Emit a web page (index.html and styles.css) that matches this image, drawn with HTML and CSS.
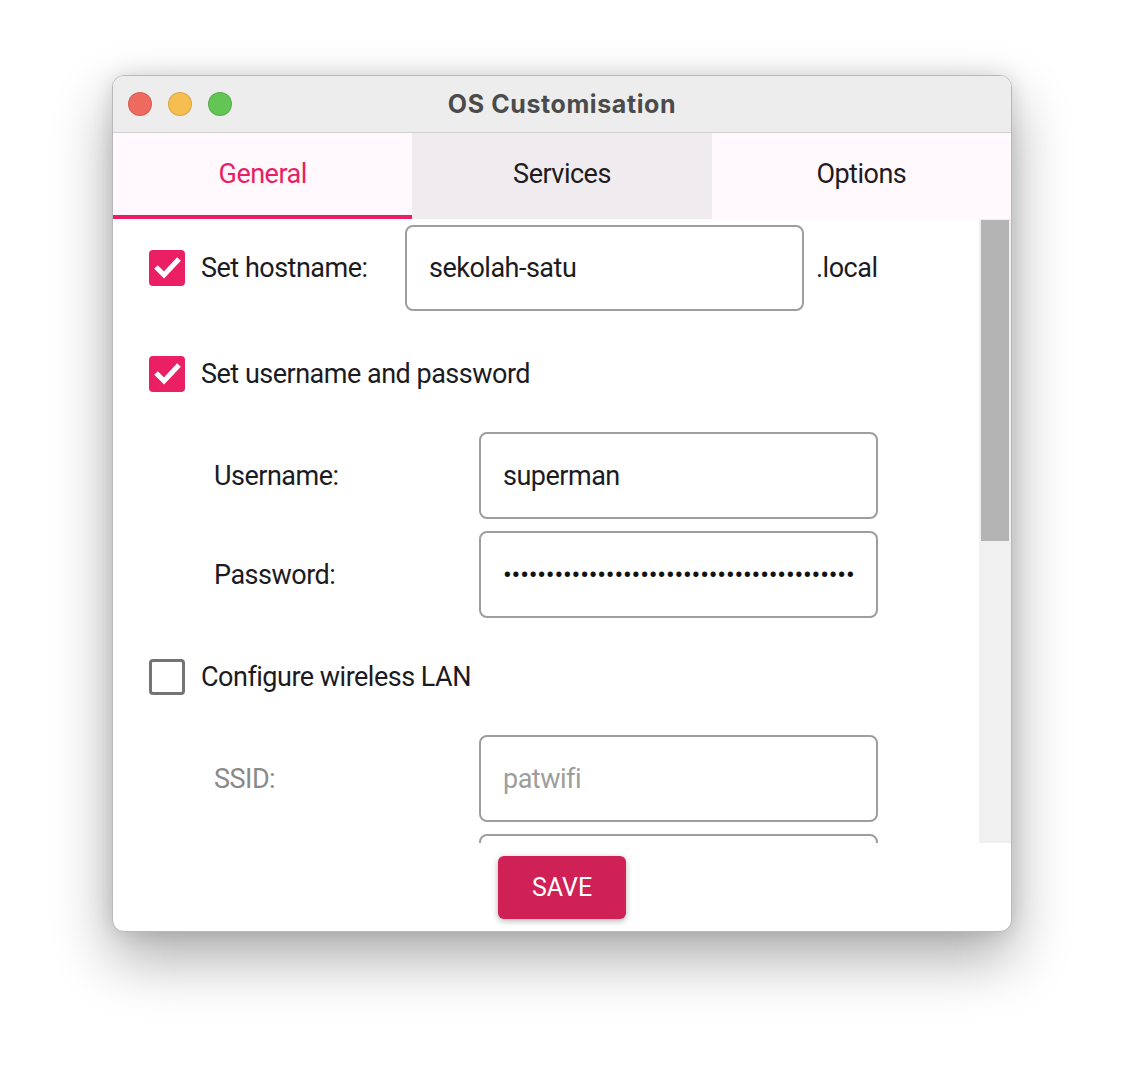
FILE: index.html
```html
<!DOCTYPE html>
<html lang="en">
  <head>
    <meta charset="UTF-8" />
    <meta name="viewport" content="width=device-width, initial-scale=1.0" />
    <title>OS Customisation</title>
    <link rel="stylesheet" href="styles.css">
  </head>
  <body>
    <div class="window">
      <div class="titlebar">
        <div class="lights">
          <span class="light red"></span>
          <span class="light yellow"></span>
          <span class="light green"></span>
        </div>
        <div class="title">OS Customisation</div>
      </div>
      <div class="tabs">
        <div class="tab active">General</div>
        <div class="tab hover">Services</div>
        <div class="tab">Options</div>
      </div>
      <div class="body">
        <div class="scroll">
          <div class="row host-row">
            <span class="check on">
              <svg viewBox="0 0 36 36" width="36" height="36"><path d="M7 17 L15 25 L30 9" fill="none" stroke="#fff" stroke-width="5"/></svg>
            </span>
            <span class="check-label host-label">Set hostname:</span>
            <input class="field" type="text" value="sekolah-satu" />
            <span class="suffix">.local</span>
          </div>

          <div class="row check-row">
            <span class="check on">
              <svg viewBox="0 0 36 36" width="36" height="36"><path d="M7 17 L15 25 L30 9" fill="none" stroke="#fff" stroke-width="5"/></svg>
            </span>
            <span class="check-label">Set username and password</span>
          </div>
          <div class="sub">
            <div class="row sub-row">
              <label class="sub-label">Username:</label>
              <input class="field" type="text" value="superman" />
            </div>
            <div class="row sub-row">
              <label class="sub-label">Password:</label>
              <input class="field pass" type="password" value="aaaaaaaaaaaaaaaaaaaaaaaaaaaaaaaaaaaaaaaaa" />
            </div>
          </div>

          <div class="row check-row">
            <span class="check off"></span>
            <span class="check-label">Configure wireless LAN</span>
          </div>
          <div class="sub">
            <div class="row sub-row">
              <label class="sub-label muted">SSID:</label>
              <input class="field" type="text" placeholder="patwifi" disabled />
            </div>
            <div class="row sub-row">
              <label class="sub-label muted"></label>
              <input class="field" type="text" disabled />
            </div>
          </div>
        </div>
        <div class="scrollbar">
          <div class="thumb"></div>
        </div>
      </div>
      <div class="footer">
        <button class="save">SAVE</button>
      </div>
    </div>
  </body>
</html>
```

FILE: styles.css
```css
html {
  font-family: "Roboto", "Liberation Sans", sans-serif;
}
body {
  margin: 0;
  padding: 75px 0 0 112px;
  min-height: 100vh;
  box-sizing: border-box;
  background: #ffffff;
}
.window {
  width: 898px;
  height: 855px;
  border: 1px solid #b8b8b8;
  border-radius: 12px;
  background: #ffffff;
  overflow: hidden;
  display: flex;
  flex-direction: column;
  box-shadow: 0 26px 60px rgba(0, 0, 0, 0.33), 0 0 20px rgba(0, 0, 0, 0.12);
}
.titlebar {
  height: 56px;
  flex-shrink: 0;
  background: #ecedec;
  border-bottom: 1px solid #d2d2d2;
  display: flex;
  align-items: center;
  position: relative;
}
.lights {
  display: flex;
  gap: 16px;
  padding-left: 15px;
}
.light {
  width: 22px;
  height: 22px;
  border-radius: 50%;
  border: 1px solid rgba(0, 0, 0, 0.12);
}
.red {
  background: #ee6a5f;
}
.yellow {
  background: #f5be4f;
}
.green {
  background: #62c554;
}
.title {
  position: absolute;
  left: 0;
  right: 0;
  text-align: center;
  font-family: "Inter", "Roboto", sans-serif;
  font-size: 25px;
  letter-spacing: 0.6px;
  font-weight: 700;
  color: #4b4b4b;
  pointer-events: none;
}
.tabs {
  display: flex;
  height: 86px;
  flex-shrink: 0;
}
.tab {
  flex: 1;
  display: flex;
  align-items: center;
  justify-content: center;
  font-size: 27px;
  letter-spacing: -0.5px;
  color: #1f1b20;
  background: #fff8fc;
  border-bottom: 4px solid transparent;
  box-sizing: border-box;
}
.tab.active {
  color: #e91e63;
  border-bottom-color: #e91e63;
}
.tab.hover {
  background: #efebee;
  border-bottom-color: #efebee;
}
.body {
  display: flex;
  height: 624px;
  flex-shrink: 0;
}
.scroll {
  flex: 1;
  overflow: hidden;
  padding: 6px 0 0 36px;
}
.scrollbar {
  width: 28px;
  padding: 1px 2px;
  background: #f0f0f0;
}
.thumb {
  height: 321px;
  background: #b4b4b4;
}
.row {
  display: flex;
  align-items: center;
}
.check {
  width: 36px;
  height: 36px;
  border-radius: 4px;
  box-sizing: border-box;
  flex-shrink: 0;
}
.check svg {
  display: block;
}
.check.on {
  background: #ea1f64;
}
.check.off {
  border: 3px solid #747474;
}
.check-label {
  margin-left: 16px;
  font-size: 27px;
  letter-spacing: -0.5px;
  color: #1c1b1f;
}
.host-label {
  width: 204px;
}
.field {
  width: 399px;
  height: 86px;
  box-sizing: border-box;
  border: 2px solid #9e9e9e;
  border-radius: 8px;
  padding: 0 22px;
  font-family: "Roboto", "Liberation Sans", sans-serif;
  font-size: 27px;
  letter-spacing: -0.5px;
  color: #1c1b1f;
  background: #ffffff;
  outline: none;
}
.field::placeholder {
  color: #9d9d9d;
}
.field.pass {
  font-size: 26px;
  letter-spacing: -0.2px;
  color: #111;
}
.suffix {
  margin-left: 12px;
  font-size: 27px;
  letter-spacing: -0.5px;
  color: #1c1b1f;
}
.check-row {
  margin-top: 45px;
}
.sub {
  padding-left: 65px;
  margin-top: 40px;
  display: flex;
  flex-direction: column;
  gap: 12px;
}
.sub + .check-row {
  margin-top: 41px;
}
.sub-row .field {
  height: 87px;
}
.sub-label {
  width: 265px;
  font-size: 27px;
  letter-spacing: -0.5px;
  color: #1c1b1f;
}
.sub-label.muted {
  color: #8a8a8a;
}
.footer {
  flex: 1;
  display: flex;
  justify-content: center;
  padding-top: 13px;
  align-items: flex-start;
}
.save {
  width: 128px;
  height: 63px;
  border: none;
  border-radius: 6px;
  background: #cf2155;
  color: #ffffff;
  font-family: "Roboto", "Liberation Sans", sans-serif;
  font-size: 25px;
  box-shadow: 0 2px 6px rgba(0, 0, 0, 0.3);
  cursor: pointer;
}
```
